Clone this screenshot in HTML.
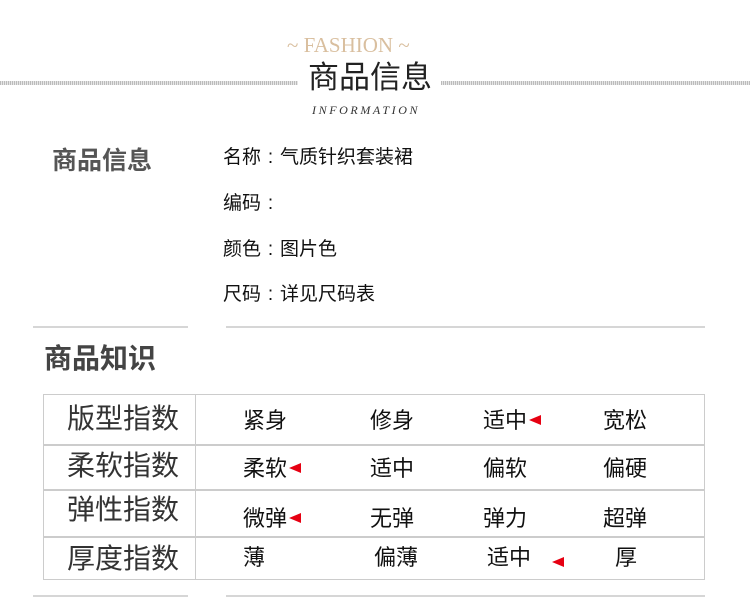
<!DOCTYPE html>
<html><head><meta charset="utf-8"><style>
*{margin:0;padding:0;box-sizing:border-box}
body{width:750px;height:616px;background:#fff;position:relative;overflow:hidden;font-family:"Liberation Sans","Noto Sans CJK SC",sans-serif;color:#111}
.a{position:absolute;white-space:nowrap;line-height:1}
.hl{position:absolute;height:4px;background:repeating-linear-gradient(90deg,#bbb 0 1px,#e6e6e6 1px 2px)}
.ln{position:absolute;height:2px;background:#d6d6d6}
.v{position:absolute;background:#ccc}
.lab{position:absolute;left:67px;font-size:28px;color:#333;line-height:1}
.o{position:absolute;font-size:22px;line-height:1;color:#111}
.tri{display:inline-block;width:0;height:0;border-top:5px solid transparent;border-bottom:5px solid transparent;border-right:12px solid #e60012;vertical-align:middle;margin-left:2px;position:relative;top:-2px}
.c{display:inline-block;width:19px;text-align:center}
</style></head><body>
<div class="a" style="left:287px;top:35px;font-family:'Liberation Serif',serif;font-size:21px;color:#d9bf9f">~ FASHION ~</div>
<div class="hl" style="left:0;top:81px;width:298px"></div>
<div class="hl" style="left:441px;top:81px;width:309px"></div>
<div class="a" style="left:308px;top:62px;font-size:31px;color:#222">商品信息</div>
<div class="a" style="left:312px;top:104px;font-family:'Liberation Serif',serif;font-style:italic;font-size:12px;letter-spacing:2.6px;color:#333">INFORMATION</div>

<div class="a" style="left:52px;top:149px;font-size:25px;font-weight:bold;color:#555">商品信息</div>
<div class="a" style="left:223px;top:148px;font-size:19px">名称<span class="c">:</span>气质针织套装裙</div>
<div class="a" style="left:223px;top:194px;font-size:19px">编码<span class="c">:</span></div>
<div class="a" style="left:223px;top:240px;font-size:19px">颜色<span class="c">:</span>图片色</div>
<div class="a" style="left:223px;top:285px;font-size:19px">尺码<span class="c">:</span>详见尺码表</div>

<div class="ln" style="left:33px;top:326px;width:155px"></div>
<div class="ln" style="left:226px;top:326px;width:479px"></div>
<div class="a" style="left:44px;top:345px;font-size:28px;font-weight:bold;color:#444">商品知识</div>

<div class="v" style="left:43px;top:394px;width:662px;height:1px"></div>
<div class="v" style="left:43px;top:444px;width:662px;height:2px"></div>
<div class="v" style="left:43px;top:489px;width:662px;height:2px"></div>
<div class="v" style="left:43px;top:536px;width:662px;height:2px"></div>
<div class="v" style="left:43px;top:579px;width:662px;height:1px"></div>
<div class="v" style="left:43px;top:394px;width:1px;height:186px"></div>
<div class="v" style="left:195px;top:394px;width:1px;height:186px"></div>
<div class="v" style="left:704px;top:394px;width:1px;height:186px"></div>

<div class="lab" style="top:405px">版型指数</div>
<div class="lab" style="top:452px">柔软指数</div>
<div class="lab" style="top:496px">弹性指数</div>
<div class="lab" style="top:545px">厚度指数</div>

<div class="o" style="left:243px;top:410px">紧身</div>
<div class="o" style="left:370px;top:410px">修身</div>
<div class="o" style="left:483px;top:410px">适中<span class="tri"></span></div>
<div class="o" style="left:603px;top:410px">宽松</div>

<div class="o" style="left:243px;top:458px">柔软<span class="tri"></span></div>
<div class="o" style="left:370px;top:458px">适中</div>
<div class="o" style="left:483px;top:458px">偏软</div>
<div class="o" style="left:603px;top:458px">偏硬</div>

<div class="o" style="left:243px;top:508px">微弹<span class="tri"></span></div>
<div class="o" style="left:370px;top:508px">无弹</div>
<div class="o" style="left:483px;top:508px">弹力</div>
<div class="o" style="left:603px;top:508px">超弹</div>

<div class="o" style="left:243px;top:547px">薄</div>
<div class="o" style="left:374px;top:547px">偏薄</div>
<div class="o" style="left:487px;top:547px">适中</div>
<span class="tri" style="position:absolute;left:550px;top:557px"></span>
<div class="o" style="left:615px;top:547px">厚</div>

<div class="ln" style="left:33px;top:595px;width:155px"></div>
<div class="ln" style="left:226px;top:595px;width:479px"></div>
</body></html>
